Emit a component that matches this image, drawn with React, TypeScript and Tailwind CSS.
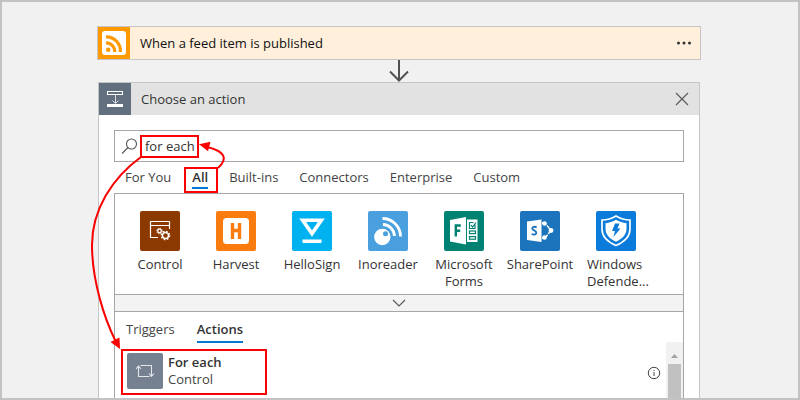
import { useState } from "react";
import type { ReactNode } from "react";

const categories = ["For You", "All", "Built-ins", "Connectors", "Enterprise", "Custom"];

function FeedIcon() {
  return (
    <svg viewBox="0 0 32 32" className="size-8 shrink-0 bg-[#ff9900]" aria-hidden="true">
      <rect x="4" y="4" width="24" height="24" rx="3" fill="#fff" />
      <g fill="none" stroke="#ff9900" strokeWidth="3.2">
        <path d="M8 9.8 A14.2 14.2 0 0 1 22.4 25" />
        <path d="M8 15.8 A8.8 8.8 0 0 1 16.8 25" />
      </g>
      <circle cx="10.2" cy="22.7" r="2.3" fill="#ff9900" />
    </svg>
  );
}

function ActionIcon() {
  return (
    <svg viewBox="0 0 32 32" className="size-8 shrink-0 bg-[#626f7e]" aria-hidden="true">
      <rect x="8.5" y="8.5" width="15" height="3" fill="none" stroke="#fff" />
      <path d="M16.5 12 V20 M13.5 17.5 L16.5 20.5 L19.5 17.5" fill="none" stroke="#d9dde1" />
      <rect x="8" y="21" width="16" height="3" fill="#fff" />
    </svg>
  );
}

function Tile({ color, children }: { color: string; children: ReactNode }) {
  return (
    <svg viewBox="0 0 40 40" className="size-10 rounded-[2px]" aria-hidden="true">
      <rect width="40" height="40" fill={color} />
      {children}
    </svg>
  );
}

const connectors: { label: string; left?: boolean; icon: ReactNode }[] = [
  {
    label: "Control",
    icon: (
      <Tile color="#8c3900">
        <g fill="none" stroke="#fff">
          <path d="M18 26.5 H10.5 V10.5 H29.5 V18" strokeWidth="1.2" />
          <path d="M10.5 14.5 H29.5" strokeWidth="1.2" />
          <circle cx="19.5" cy="20" r="1.8" strokeWidth="1.3" />
          <circle cx="19.5" cy="20" r="2.8" strokeWidth="1" strokeDasharray="1.1 1.1" />
          <circle cx="25.5" cy="24.5" r="3" strokeWidth="1.4" />
          <circle cx="25.5" cy="24.5" r="4.2" strokeWidth="1.3" strokeDasharray="1.65 1.65" />
        </g>
      </Tile>
    ),
  },
  {
    label: "Harvest",
    icon: (
      <Tile color="#fa7c10">
        <rect x="7" y="7" width="26" height="26" rx="3.5" fill="#fff" />
        <path d="M16.5 12 V28 M23.5 12 V28 M16.5 19.5 H23.5" stroke="#fa7c10" strokeWidth="3.4" />
      </Tile>
    ),
  },
  {
    label: "HelloSign",
    icon: (
      <Tile color="#00b3f0">
        <path d="M10.7 9.3 H29.3 L20 22.5 Z" fill="none" stroke="#fff" strokeWidth="3.6" />
        <rect x="10.5" y="28.5" width="19" height="3.5" fill="#fff" />
      </Tile>
    ),
  },
  {
    label: "Inoreader",
    icon: (
      <Tile color="#4a9fdf">
        <circle cx="14.3" cy="26" r="8.2" fill="#fff" />
        <circle cx="17.5" cy="22.7" r="2.5" fill="#4a9fdf" />
        <path d="M15 13.5 A12 12 0 0 1 26.5 25 M14.5 7.5 A18 18 0 0 1 32.5 25.5" fill="none" stroke="#fff" strokeWidth="2.8" />
      </Tile>
    ),
  },
  {
    label: "Microsoft Forms",
    icon: (
      <Tile color="#008272">
        <path d="M6 9 L22 6 V33.5 L6 30.5 Z" fill="#fff" />
        <path d="M11.8 25.5 V14.5 H16.8 M11.8 19.7 H16.2" fill="none" stroke="#008272" strokeWidth="2.4" />
        <path d="M23 8.5 H33.5 V31 H23 Z" fill="#fff" />
        <g fill="none" stroke="#008272" strokeWidth="1.2">
          <path d="M31 13.5 V17.5 H25.5 V11.5 H29.5 M27 14 L28.5 16 L32 11.5" />
          <rect x="25.5" y="20" width="6" height="2.6" />
          <rect x="25.5" y="25.6" width="6" height="2.6" />
        </g>
      </Tile>
    ),
  },
  {
    label: "SharePoint",
    icon: (
      <Tile color="#1c75bc">
        <path d="M22 12 H25 L31 19.5 L25 27 H22" fill="none" stroke="#fff" strokeWidth="1.4" strokeDasharray="5 1" />
        <circle cx="24.5" cy="12.5" r="2.3" fill="#fff" />
        <circle cx="31" cy="19.5" r="2.4" fill="#fff" />
        <circle cx="24.5" cy="26.5" r="2.3" fill="#fff" />
        <path d="M7 10.5 L21.5 8.5 V31 L7 29 Z" fill="#fff" />
        <path d="M16.7 16.3 C14.8 15.4 12.3 15.6 12.3 17.4 C12.3 19.7 16.3 19.2 16.3 21.8 C16.3 23.9 13.4 24 11.7 23" fill="none" stroke="#1c75bc" strokeWidth="1.9" />
      </Tile>
    ),
  },
  {
    label: "Windows Defende...",
    left: true,
    icon: (
      <Tile color="#0a7bda">
        <path d="M20 5 C16 7.5 11 9 6 9 V18 C6 26 13 31.5 20 34.5 C27 31.5 34 26 34 18 V9 C29 9 24 7.5 20 5 Z" fill="none" stroke="#fff" strokeWidth="1.7" />
        <path d="M20 8.8 C17 10.6 13 12 9.5 12.2 V18 C9.5 24 14.5 28.2 20 30.8 C25.5 28.2 30.5 24 30.5 18 V12.2 C27 12 23 10.6 20 8.8 Z" fill="#fff" />
        <path d="M19 12.5 H23.5 L21.5 17.5 H24.5 L17.5 26 L19 20 H16 Z" fill="#0a7bda" />
      </Tile>
    ),
  },
];

function Annotations() {
  return (
    <svg viewBox="2 2 796 396" className="pointer-events-none absolute top-0 left-0 h-[396px] w-[796px]" aria-hidden="true">
      <g fill="none" stroke="#fa0000" strokeWidth="2">
        <rect x="141" y="136" width="57" height="21" />
        <rect x="185" y="168" width="32" height="24" />
        <rect x="122" y="350" width="144" height="44" />
        <path d="M141 157 C112 178 92 210 92 245 C92 280 104 318 116 342" />
        <path d="M218 168 C229 158 224 151 207 147" />
      </g>
      <path d="M120 349 L110.5 342 L119.5 337.5 Z M199 144.3 L210.5 141.8 L208 151.2 Z" fill="#fa0000" />
    </svg>
  );
}

export default function App() {
  const [query, setQuery] = useState("for each");
  return (
    <div className="relative h-screen overflow-hidden border-2 border-[#c3c3c3] bg-[#f1f1f1] pt-6 pr-[97px] pl-[95px] font-['Open_Sans','Noto_Sans',sans-serif] text-[13px] leading-[17px] text-[#333]">
      <div className="flex h-[34px] items-center border border-[#c5c5c5] bg-[#ffefdb]">
        <FeedIcon />
        <h2 className="flex-1 pl-[10px] text-[#111]">When a feed item is published</h2>
        <button type="button" aria-label="More commands" className="mr-2 flex h-4 w-4 items-center justify-center">
          <svg viewBox="0 0 16 4" className="h-1 w-4" fill="#333" aria-hidden="true">
            <circle cx="2.5" cy="2" r="1.5" />
            <circle cx="8" cy="2" r="1.5" />
            <circle cx="13.5" cy="2" r="1.5" />
          </svg>
        </button>
      </div>

      <svg viewBox="0 0 22 22" className="mx-auto block size-[22px]" fill="none" stroke="#505050" strokeWidth="2" aria-hidden="true">
        <path d="M11 0 V20 M2 11.5 L11 20.5 L20 11.5" />
      </svg>

      <section className="mr-px ml-px border border-[#c5c5c5] bg-white">
        <header className="flex h-8 items-center bg-[#e2e2e2]">
          <ActionIcon />
          <h2 className="flex-1 pl-[10px]">Choose an action</h2>
          <button type="button" aria-label="Close" className="mr-[10px]">
            <svg viewBox="0 0 14 14" className="size-[14px]" stroke="#555" strokeWidth="1.1" aria-hidden="true">
              <path d="M1 1 L13 13 M13 1 L1 13" />
            </svg>
          </button>
        </header>

        <div className="px-[15px] pt-[15px]">
          <label className="flex h-8 items-center border border-[#a6a6a6] pl-[6px]">
            <svg viewBox="0 0 18 18" className="size-[18px] shrink-0" fill="none" stroke="#555" strokeWidth="1.1" aria-hidden="true">
              <circle cx="10.5" cy="7" r="5" />
              <path d="M7 10.5 L1 16.5" />
            </svg>
            <input
              aria-label="Search connectors and actions"
              className="ml-[6px] h-6 min-w-0 flex-1 bg-transparent outline-none"
              value={query}
              onChange={(e) => setQuery(e.target.value)}
            />
          </label>

          <nav className="flex h-[31px] items-start gap-[21px] pt-[7px] pl-[11px]">
            {categories.map((name) => (
              <button
                key={name}
                type="button"
                className={name === "All" ? "border-b-2 border-[#0078d4] pb-px font-semibold" : "text-[#444]"}
              >
                {name}
              </button>
            ))}
          </nav>

          <div className="border border-b-0 border-[#a6a6a6]">
            <ul className="flex h-[100px] flex-wrap overflow-hidden pt-[17px] pl-[7px]">
              {connectors.map((c) => (
                <li key={c.label} className="w-[76px]">
                  <button type="button" className="flex w-full flex-col items-center gap-[5px]">
                    {c.icon}
                    <span className={c.left ? "w-[58px] text-left" : "w-[70px] text-center"}>{c.label}</span>
                  </button>
                </li>
              ))}
            </ul>
            <button
              type="button"
              aria-label="Show more connectors"
              className="flex h-[18px] w-full items-center justify-center border-y border-[#a6a6a6] bg-[#f3f3f3]"
            >
              <svg viewBox="0 0 14 8" className="h-2 w-[14px]" fill="none" stroke="#555" strokeWidth="1.1" aria-hidden="true">
                <path d="M1 1 L7 7 L13 1" />
              </svg>
            </button>

            <nav className="flex h-[30px] items-start gap-[22px] pt-[9px] pl-[11px]">
              <button type="button" className="text-[#444]">Triggers</button>
              <button type="button" className="border-b-2 border-[#0078d4] pb-[3px] font-semibold">Actions</button>
            </nav>

            <div className="flex h-[60px]">
              <button type="button" className="mt-[11px] flex h-9 flex-1 items-center pl-3 text-left">
                <svg viewBox="0 0 36 36" className="size-9 rounded-[2px] bg-[#758091]" fill="none" stroke="#e3e6e9" strokeWidth="1.1" aria-hidden="true">
                  <path d="M11.5 13.5 V23.5 H22.5 M9 16 L11.5 13 L14 16 M13.5 12.5 H24.5 V23 M22 20.5 L24.5 23.5 L27 20.5" />
                </svg>
                <span className="ml-[5px] flex flex-1 flex-col">
                  <span className="font-semibold">For each</span>
                  <span className="text-[#444]">Control</span>
                </span>
                <svg viewBox="0 0 14 14" className="mt-1 mr-[5px] size-[14px]" fill="none" stroke="#444" aria-hidden="true">
                  <circle cx="7" cy="7" r="5.7" />
                  <path d="M7 6 V10 M7 4 V5" />
                </svg>
              </button>
              <div className="flex w-[17px] flex-col items-center bg-[#f1f1f1] pt-3">
                <svg viewBox="0 0 7 4" className="h-1 w-[7px]" fill="#a3a3a3" aria-hidden="true">
                  <path d="M3.5 0 L7 4 H0 Z" />
                </svg>
                <div className="mt-[6px] w-[13px] flex-1 bg-[#c1c1c1]" />
              </div>
            </div>
          </div>
        </div>
      </section>

      <Annotations />
    </div>
  );
}
